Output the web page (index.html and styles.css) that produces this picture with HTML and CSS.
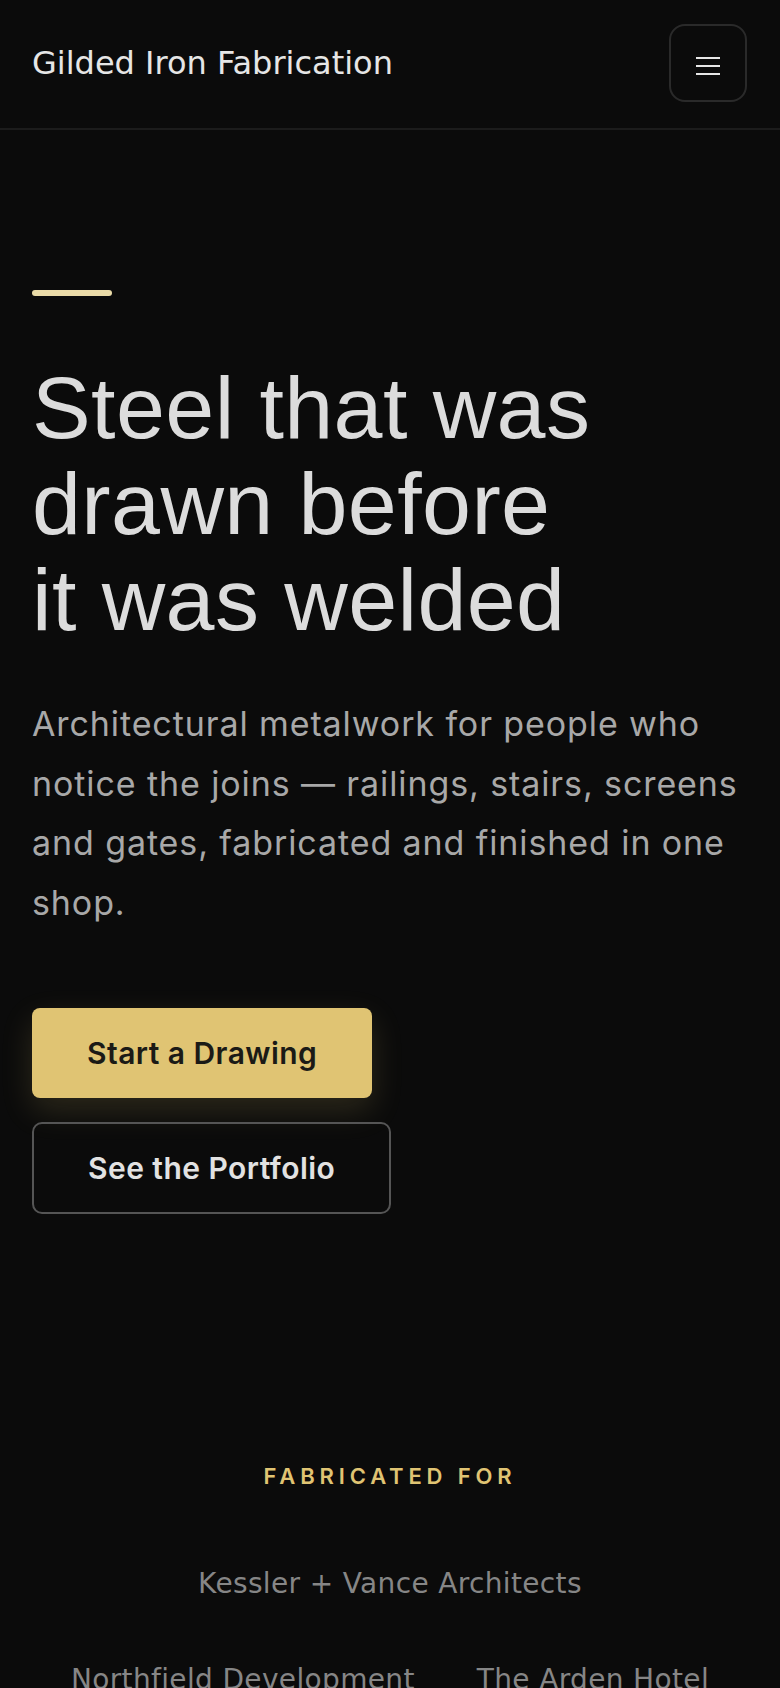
FILE: index.html
```html
<!DOCTYPE html>
<html lang="en">
<head>
<meta charset="utf-8">
<title>Gilded Iron Fabrication</title>
<link rel="stylesheet" href="styles.css">
</head>
<body>
<header class="site-header">
  <div class="brand">Gilded Iron Fabrication</div>
  <button class="menu-btn" aria-label="Menu">
    <span class="bars"><span></span><span></span><span></span></span>
  </button>
</header>
<main>
  <section class="hero">
    <div class="rule"></div>
    <h1 class="headline">Steel that was<br>drawn before<br>it was welded</h1>
    <p class="lede">Architectural metalwork for people who notice the joins — railings, stairs, screens and gates, fabricated and finished in one shop.</p>
    <div class="actions">
      <a class="btn btn-primary" href="#">Start a Drawing</a>
      <a class="btn btn-ghost" href="#">See the Portfolio</a>
    </div>
  </section>
  <section class="clients">
    <div class="eyebrow">FABRICATED FOR</div>
    <ul class="logos">
      <li>Kessler + Vance Architects</li>
      <li>Northfield Development</li>
      <li>The Arden Hotel</li>
    </ul>
  </section>
</main>
</body>
</html>
```

FILE: styles.css
```css
* { box-sizing: border-box; }
html, body { margin: 0; padding: 0; }
body {
  background: #0b0b0b;
  color: #e6e6e6;
  font-family: "Inter", "Liberation Sans", sans-serif;
  overflow: hidden;
}
.site-header {
  display: flex;
  align-items: center;
  justify-content: space-between;
  height: 130px;
  padding: 0 33px 0 32px;
  border-bottom: 2px solid #1c1c1c;
}
.brand {
  font-family: "DejaVu Sans", sans-serif;
  font-size: 32px;
  color: #e6e6e6;
  margin-top: -2px;
}
.menu-btn {
  width: 78px;
  height: 78px;
  border: 2px solid #2a2a2a;
  border-radius: 16px;
  background: transparent;
  display: flex;
  align-items: center;
  justify-content: center;
  padding: 6px 0 0 0;
  margin-top: -2px;
}
.bars { display: flex; flex-direction: column; gap: 5.5px; }
.bars span { display: block; width: 24px; height: 2.5px; background: #e6e6e6; }

.hero {
  padding: 160px 32px 160px;
}
.rule {
  width: 80px;
  height: 6px;
  border-radius: 3px;
  background: #eadba8;
  margin-bottom: 64px;
}
.headline {
  margin: 0 0 46px;
  font-family: "Liberation Sans", Arial, sans-serif;
  font-weight: 400;
  font-size: 88px;
  line-height: 96px;
  letter-spacing: 0.4px;
  color: #dcdcdc;
}
.lede {
  margin: 0 0 76px;
  font-size: 34px;
  line-height: 59.5px;
  letter-spacing: 0.9px;
  color: #a8a8a8;
}
.actions {
  display: flex;
  flex-direction: column;
  align-items: flex-start;
  gap: 24px;
}
.btn {
  display: inline-block;
  text-decoration: none;
  font-family: "Inter", sans-serif;
  font-weight: 600;
  font-size: 30px;
  line-height: 32px;
  letter-spacing: 0.45px;
  padding: 29px 55px;
  border-radius: 8px;
}
.btn-primary {
  background: #e0c473;
  color: #1b1a16;
  box-shadow: 0 12px 32px rgba(224, 196, 115, 0.16);
}
.btn-ghost {
  border: 2px solid #555;
  color: #e2e2e2;
  border-radius: 10px;
  padding: 28px 54px;
}

.clients {
  padding: 86px 32px 0;
  text-align: center;
}
.eyebrow {
  font-family: "Inter", sans-serif;
  font-weight: 600;
  font-size: 22px;
  line-height: 32px;
  letter-spacing: 0.22em;
  color: #e0c473;
  margin-bottom: 72px;
}
.logos {
  list-style: none;
  margin: 0;
  padding: 0;
  display: flex;
  flex-wrap: wrap;
  justify-content: center;
  gap: 56px 62px;
}
.logos li {
  font-family: "DejaVu Sans", sans-serif;
  font-size: 28px;
  line-height: 40px;
  letter-spacing: 0.35px;
  color: #868686;
}
```
